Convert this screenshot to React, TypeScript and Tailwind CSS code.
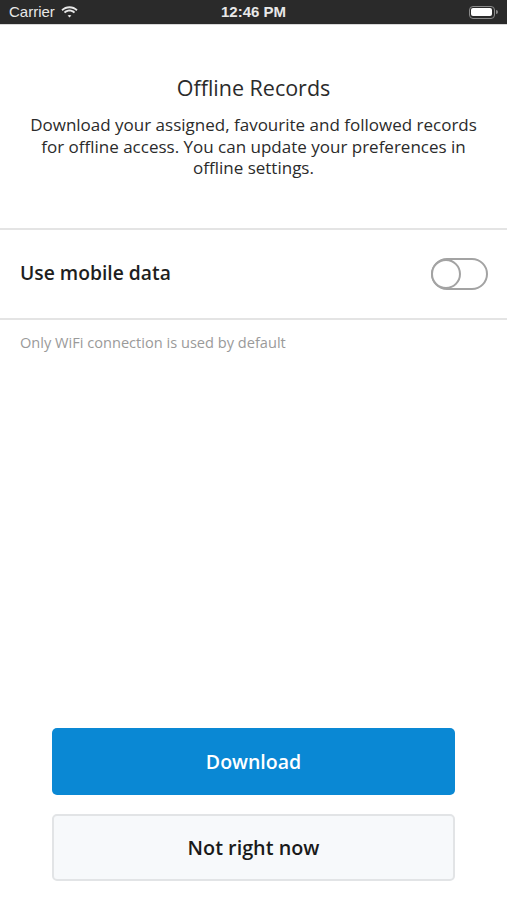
import React, { useState } from "react";

export default function App() {
  const [mobileData, setMobileData] = useState(false);

  return (
    <div className="w-[507px] h-[900px] bg-white flex flex-col" style={{ fontFamily: '"Open Sans", "Noto Sans", sans-serif' }}>
      {/* status bar */}
      <div className="h-[25px] bg-[#2a2a2a] flex items-center justify-between px-[9px] text-[#e8e8e8] text-[15px] border-b border-[#d8d8d8]" style={{ fontFamily: '"Liberation Sans", Arial, sans-serif' }}>
        <div className="flex items-center gap-[6px] w-[120px]">
          <span>Carrier</span>
          <svg width="17" height="13" viewBox="0 0 17 13" fill="#e8e8e8">
            <path d="M8.5 2.2c2.6 0 5 1 6.8 2.7l1.3-1.4C14.4 1.4 11.6.2 8.5.2S2.6 1.4.4 3.5l1.3 1.4C3.5 3.2 5.9 2.2 8.5 2.2z" />
            <path d="M8.5 5.6c1.6 0 3.1.6 4.3 1.7l1.3-1.4C12.6 4.5 10.6 3.6 8.5 3.6S4.4 4.5 2.9 5.9l1.3 1.4C5.4 6.2 6.9 5.6 8.5 5.6z" />
            <path d="M8.5 8.9c.8 0 1.4.3 1.9.7L8.5 11.6 6.6 9.6c.5-.4 1.1-.7 1.9-.7z" />
          </svg>
        </div>
        <span className="font-bold">12:46 PM</span>
        <div className="w-[120px] flex justify-end items-center">
          <div className="w-[26px] h-[13px] rounded-[4px] border border-[#8a8a8a] p-[1.5px]">
            <div className="w-full h-full bg-white rounded-[2px]" />
          </div>
          <div className="w-[2px] h-[4px] bg-[#8a8a8a] rounded-r-sm ml-[1px]" />
        </div>
      </div>

      {/* header */}
      <div className="flex flex-col items-center text-center px-[27px] pt-[49px] pb-[49px]">
        <h1 className="text-[21.5px] leading-[28px] text-[#2b2b2b]">Offline Records</h1>
        <p className="mt-[12px] text-[17px] leading-[21.5px] text-[#2b2b2b]">
          Download your assigned, favourite and followed records for offline access. You can update your preferences in offline settings.
        </p>
      </div>

      {/* mobile data row */}
      <div className="border-t-2 border-b-2 border-[#e4e4e4] h-[92px] flex items-center justify-between pl-[20px] pr-[19px]">
        <span className="text-[19.3px] font-semibold text-[#1e1e1e]">Use mobile data</span>
        <button
          onClick={() => setMobileData(!mobileData)}
          className={`w-[57px] h-[32px] rounded-full border-2 flex items-center ${mobileData ? "bg-[#0a88d4] border-[#0a88d4] justify-end" : "bg-white border-[#a3a3a3] justify-start"}`}
        >
          <div className={`w-[30px] h-[30px] -m-[2px] rounded-full border-2 bg-white ${mobileData ? "border-[#0a88d4]" : "border-[#a3a3a3]"}`} />
        </button>
      </div>
      <p className="px-[20px] pt-[12px] text-[14.6px] text-[#9a9a9a]">Only WiFi connection is used by default</p>

      <div className="flex-1" />

      {/* actions */}
      <div className="flex flex-col gap-[19px] px-[52px] pb-[19px]">
        <button className="h-[67px] rounded-[5px] bg-[#0a88d4] text-white text-[19.5px] font-semibold">Download</button>
        <button className="h-[67px] rounded-[5px] bg-[#f7f9fb] border-2 border-[#e2e4e6] text-[#1a1a1a] text-[19.8px] font-semibold">Not right now</button>
      </div>
    </div>
  );
}
